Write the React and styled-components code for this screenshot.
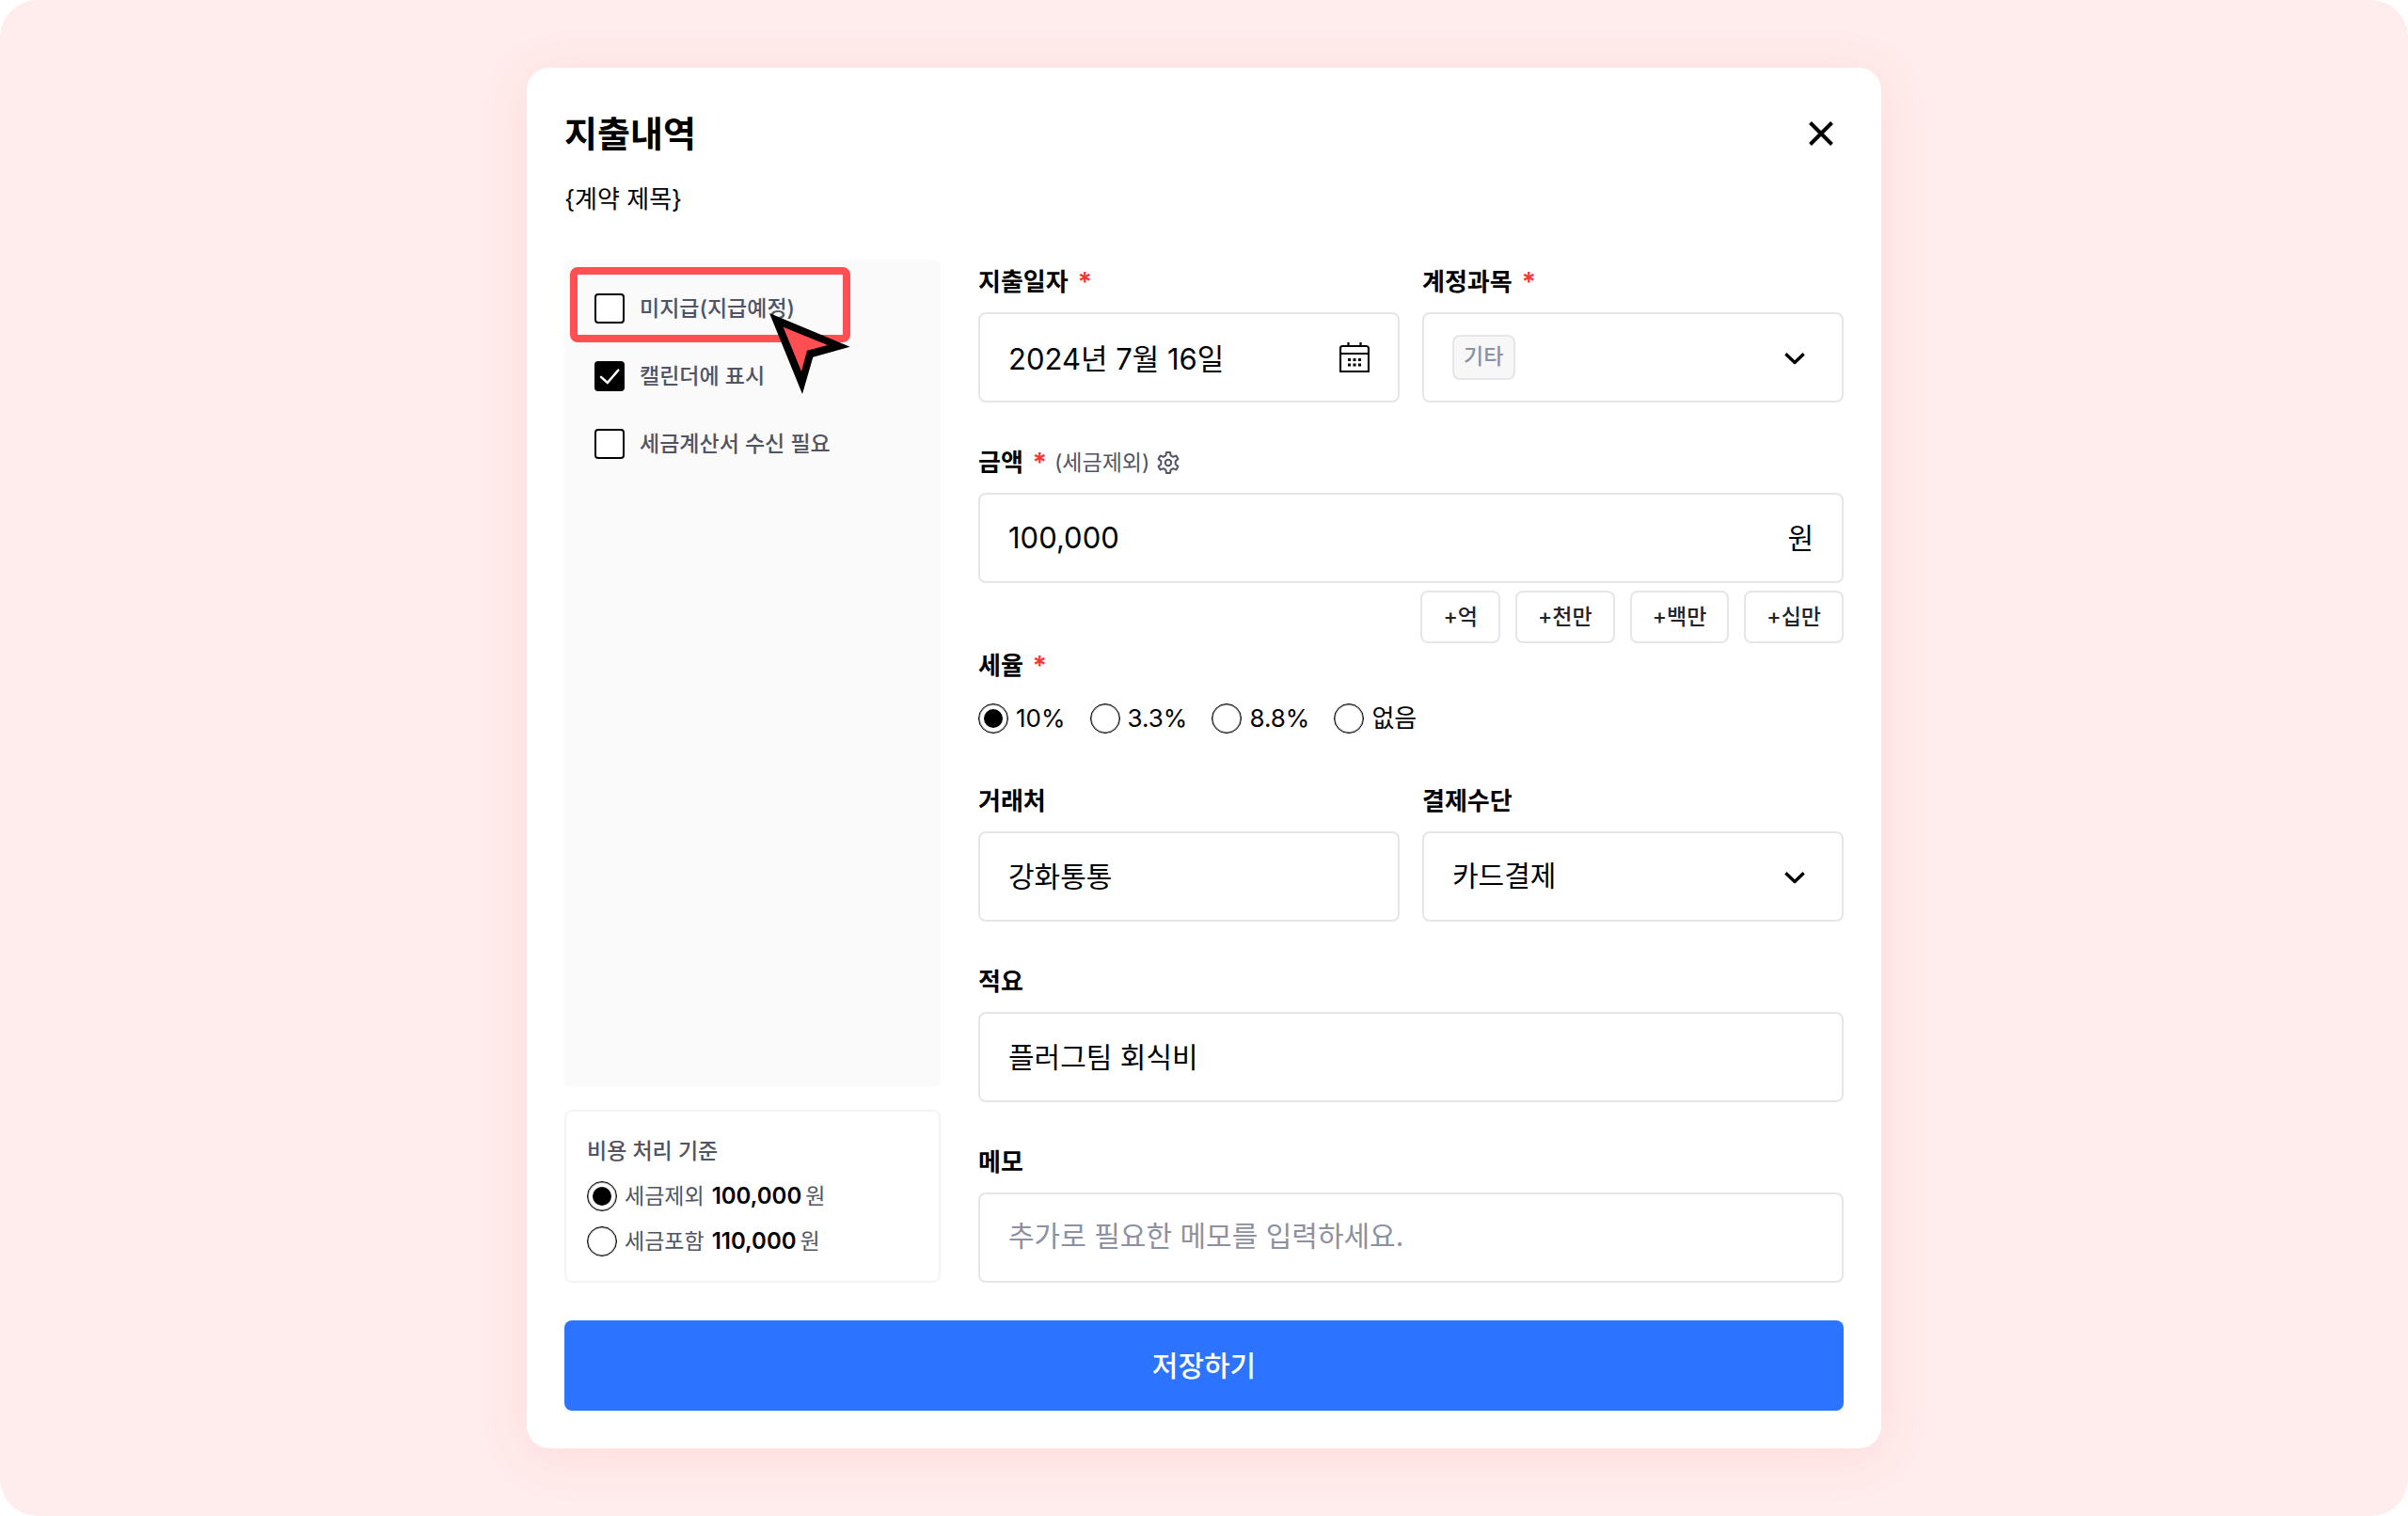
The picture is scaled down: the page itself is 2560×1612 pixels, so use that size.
import React, { useState } from "react";
import styled, { createGlobalStyle } from "styled-components";

const color = {
  text: "#000000",
  strong: "#222328",
  sub: "#505463",
  muted: "#8c91a2",
  line: "#e5e5ec",
  required: "#ff3232",
  accent: "#ff4f52",
  primary: "#2c74ff",
};

const GlobalStyle = createGlobalStyle`
  *, *::before, *::after { box-sizing: border-box; }
  body { margin: 0; background: #ffffff; }
  body, input, select, button {
    font-family: Inter, "Noto Sans CJK KR", sans-serif;
    color: ${color.text};
  }
`;

const Stage = styled.main`
  min-height: 100vh;
  display: flex;
  justify-content: center;
  align-items: center;
  padding: 72px;
  background: #ffecec;
  border-radius: 40px;
`;

const Dialog = styled.section`
  width: 100%;
  max-width: 1440px;
  padding: 40px;
  background: #ffffff;
  border-radius: 24px;
  box-shadow: 0 8px 56px rgba(255, 79, 82, 0.1);
`;

const Header = styled.header`
  display: flex;
  justify-content: space-between;
  align-items: center;
  height: 60px;
`;

const Title = styled.h1`
  margin: 0;
  font-size: 38px;
  line-height: 60px;
  font-weight: 600;
`;

const IconButton = styled.button`
  display: flex;
  align-items: center;
  justify-content: center;
  padding: 0;
  border: 0;
  background: none;
  color: ${(p) => p.$color || color.text};
  cursor: pointer;
`;

const Subtitle = styled.p`
  height: 48px;
  margin: 16px 0 40px;
  font-size: 26px;
  line-height: 48px;
`;

const Columns = styled.div`
  display: grid;
  grid-template-columns: 400px 1fr;
  gap: 40px;
`;

const Side = styled.div`
  display: flex;
  flex-direction: column;
  gap: 24px;
`;

const OptionPanel = styled.div`
  flex: 1;
  display: flex;
  flex-direction: column;
  gap: 40px;
  padding: 36px 32px;
  background: #fafafa;
  border-radius: 8px;
`;

const OptionRow = styled.div`
  position: relative;
  display: flex;
  align-items: center;
  gap: 16px;
  height: 32px;
  font-size: 23px;
  line-height: 32px;
  font-weight: 500;
  color: ${color.sub};
`;

const OptionLabel = styled.label`
  height: 32px;
`;

const Highlight = styled.div`
  position: absolute;
  left: -26px;
  top: -28px;
  width: 298px;
  height: 80px;
  border: 8px solid ${color.accent};
  border-radius: 8px;
  pointer-events: none;
`;

const Pointer = styled.svg`
  position: absolute;
  left: 186px;
  top: 21px;
  z-index: 1;
  pointer-events: none;
`;

const CheckWrap = styled.span`
  display: grid;
  flex: none;
  & > * { grid-area: 1 / 1; }
  svg { pointer-events: none; }
`;

const CheckInput = styled.input`
  appearance: none;
  width: 32px;
  height: 32px;
  margin: 0;
  background: #ffffff;
  border: 2px solid #000000;
  border-radius: 4px;
  &:checked { background: #000000; }
`;

const RadioInput = styled.input`
  appearance: none;
  flex: none;
  display: grid;
  place-items: center;
  width: 32px;
  height: 32px;
  margin: 0;
  border: 1px solid #000000;
  border-radius: 50%;
  box-shadow: inset 0 0 0 1px rgba(0, 0, 0, 0.4);
  &:checked::before {
    content: "";
    width: 20px;
    height: 20px;
    border-radius: 50%;
    background: #000000;
  }
`;

const BasisBox = styled.fieldset`
  display: flex;
  flex-direction: column;
  gap: 8px;
  min-width: 0;
  margin: 0;
  padding: 22px;
  border: 2px solid #f4f4f5;
  border-radius: 8px;
`;

const BasisTitle = styled.div`
  height: 40px;
  font-size: 23px;
  line-height: 40px;
  font-weight: 500;
  color: ${color.sub};
`;

const RadioLabel = styled.label`
  display: flex;
  align-items: center;
  gap: 8px;
  height: ${(p) => (p.$small ? 40 : 48)}px;
  font-size: ${(p) => (p.$small ? 23 : 26)}px;
  line-height: ${(p) => (p.$small ? 40 : 48)}px;
  color: ${(p) => (p.$small ? color.sub : color.text)};
`;

const Price = styled.span`
  display: flex;
  align-items: center;
  gap: 4px;
`;

const Amount = styled.strong`
  font-size: 24px;
  font-weight: 600;
  color: ${color.text};
`;

const Form = styled.div`
  display: flex;
  flex-direction: column;
  gap: 40px;
`;

const Pair = styled.div`
  display: grid;
  grid-template-columns: 1fr 1fr;
  gap: 24px;
`;

const Group = styled.div`
  display: flex;
  flex-direction: column;
`;

const Field = styled.div`
  display: flex;
  flex-direction: column;
  gap: 8px;
  min-width: 0;
`;

const LabelRow = styled.div`
  display: flex;
  align-items: center;
  gap: 8px;
  height: 48px;
  font-size: 26px;
  line-height: 48px;
  font-weight: 600;
`;

const Required = styled.span`
  margin-left: 2px;
  font-size: 28px;
  color: ${color.required};
`;

const LabelNote = styled.span`
  font-size: 23px;
  font-weight: 400;
  color: ${color.sub};
`;

const Control = styled.div`
  display: flex;
  align-items: center;
  gap: 16px;
  height: 96px;
  padding: 0 30px;
  border: 2px solid ${color.line};
  border-radius: 8px;
  font-size: 30px;
`;

const TextInput = styled.input`
  flex: 1;
  min-width: 0;
  height: 92px;
  padding: 0 0 ${(p) => (p.$numeric ? 2 : 4)}px;
  border: 0;
  outline: 0;
  background: none;
  font-size: ${(p) => (p.$numeric ? 31 : 30)}px;
  &::placeholder { color: ${color.muted}; opacity: 1; }
`;

const Unit = styled.span`
  padding-bottom: 4px;
`;

const PlainSelect = styled.select`
  appearance: none;
  flex: 1;
  min-width: 0;
  height: 92px;
  padding: 0 0 2px;
  border: 0;
  outline: 0;
  background: none;
  font-size: 30px;
`;

const ChipSelect = styled.select`
  appearance: none;
  height: 48px;
  margin-right: auto;
  padding: 0 10px 2px;
  border: 2px solid ${color.line};
  border-radius: 8px;
  background: #f7f7f8;
  font-size: 23px;
  font-weight: 500;
  color: ${color.muted};
`;

const QuickRow = styled.div`
  display: flex;
  justify-content: flex-end;
  gap: 16px;
`;

const QuickButton = styled.button`
  height: 56px;
  padding: 0 22px 4px;
  border: 2px solid ${color.line};
  border-radius: 8px;
  background: #ffffff;
  font-size: 23px;
  font-weight: 500;
  color: ${color.strong};
`;

const RadioRow = styled.div`
  display: flex;
  gap: 26px;
  height: 48px;
`;

const SaveButton = styled.button`
  width: 100%;
  height: 96px;
  margin-top: 40px;
  padding: 0 0 4px;
  border: 0;
  border-radius: 8px;
  background: ${color.primary};
  color: #ffffff;
  font-size: 30px;
  font-weight: 500;
`;

const CloseIcon = () => (
  <svg width="48" height="48" viewBox="0 0 48 48" fill="none" stroke="currentColor" strokeWidth="4">
    <path d="M12.5 12.5 35.5 35.5M35.5 12.5 12.5 35.5" />
  </svg>
);

const ChevronIcon = () => (
  <svg width="40" height="40" viewBox="0 0 40 40" fill="none" stroke="currentColor" strokeWidth="3.4" strokeLinejoin="round" aria-hidden="true">
    <path d="M10.4 16.2 20 25.4l9.6-9.2" />
  </svg>
);

const CalendarIcon = () => (
  <svg width="32" height="32" viewBox="0 0 32 32" aria-hidden="true">
    <path d="M1 31V6.5Q1 4 3.5 4h25Q31 4 31 6.5V31zM1 12h30M9.5 0v4M22.5 0v4" fill="none" stroke="currentColor" strokeWidth="2.2" />
    <path d="M9 17h3v3H9zM14.5 17h3v3h-3zM20 17h3v3h-3zM9 22.5h3v3H9zM14.5 22.5h3v3h-3zM20 22.5h3v3h-3z" fill="currentColor" />
  </svg>
);

const GearIcon = () => (
  <svg width="24" height="24" viewBox="0 0 24 24" fill="none" stroke="currentColor" strokeWidth="2" strokeLinejoin="round">
    <path d="M10 1h4l.6 3.3 2.5 1.5 3.3-1.2 2 3.5-2.7 2.2v3.4l2.7 2.2-2 3.5-3.3-1.2-2.5 1.5L14 23h-4l-.6-3.3-2.5-1.5-3.3 1.2-2-3.5 2.7-2.2v-3.4L1.6 8.100l2-3.5 3.3 1.2 2.5-1.5z" />
    <circle cx="12" cy="12" r="3.2" />
  </svg>
);

function CheckOption({ id, label, defaultChecked, children }) {
  const [checked, setChecked] = useState(Boolean(defaultChecked));
  return (
    <OptionRow>
      <CheckWrap>
        <CheckInput id={id} type="checkbox" checked={checked} onChange={(e) => setChecked(e.target.checked)} />
        {checked && (
          <svg width="32" height="32" viewBox="0 0 32 32" fill="none" stroke="#fff" strokeWidth="2.4" strokeLinecap="round" aria-hidden="true">
            <path d="M7 16.8 13.8 23 25.3 9.6" />
          </svg>
        )}
      </CheckWrap>
      <OptionLabel htmlFor={id}>{label}</OptionLabel>
      {children}
    </OptionRow>
  );
}

function FieldLabel({ htmlFor, children, required, extra }) {
  return (
    <LabelRow>
      <label htmlFor={htmlFor}>{children}</label>
      {required && <Required>*</Required>}
      {extra}
    </LabelRow>
  );
}

function BasisOption({ label, value, defaultChecked }) {
  return (
    <RadioLabel $small>
      <RadioInput type="radio" name="basis" defaultChecked={defaultChecked} />
      <span>{label}</span>
      <Price>
        <Amount>{value}</Amount>
        <span>원</span>
      </Price>
    </RadioLabel>
  );
}

const quickAmounts = [["+억", 100000000], ["+천만", 10000000], ["+백만", 1000000], ["+십만", 100000]];
const taxRates = ["10%", "3.3%", "8.8%", "없음"];

export default function App() {
  const [amount, setAmount] = useState(100000);
  const format = (n) => n.toLocaleString("en-US");
  return (
    <>
      <GlobalStyle />
      <Stage lang="ko">
        <Dialog role="dialog" aria-labelledby="dialog-title">
          <Header>
            <Title id="dialog-title">지출내역</Title>
            <IconButton type="button" aria-label="닫기"><CloseIcon /></IconButton>
          </Header>
          <Subtitle>{"{계약 제목}"}</Subtitle>

          <Columns>
            <Side>
              <OptionPanel>
                <CheckOption id="unpaid" label="미지급(지급예정)">
                  <Highlight />
                  <Pointer width="86" height="86" viewBox="0 0 258 258" aria-hidden="true">
                    <path d="M0 0 257 107 139 140 105 258z" fill="#000" />
                    <path d="M44 44 186 102 120 119 102 186z" fill={color.accent} />
                  </Pointer>
                </CheckOption>
                <CheckOption id="calendar" label="캘린더에 표시" defaultChecked />
                <CheckOption id="invoice" label="세금계산서 수신 필요" />
              </OptionPanel>
              <BasisBox aria-labelledby="basis-title">
                <BasisTitle id="basis-title">비용 처리 기준</BasisTitle>
                <BasisOption label="세금제외" value={format(amount)} defaultChecked />
                <BasisOption label="세금포함" value={format(Math.round(amount * 1.1))} />
              </BasisBox>
            </Side>

            <Form>
              <Pair>
                <Field>
                  <FieldLabel htmlFor="date" required>지출일자</FieldLabel>
                  <Control>
                    <TextInput id="date" $numeric defaultValue="2024년 7월 16일" />
                    <IconButton type="button" aria-label="날짜 선택"><CalendarIcon /></IconButton>
                  </Control>
                </Field>
                <Field>
                  <FieldLabel htmlFor="account" required>계정과목</FieldLabel>
                  <Control>
                    <ChipSelect id="account"><option>기타</option></ChipSelect>
                    <ChevronIcon />
                  </Control>
                </Field>
              </Pair>

              <Group>
                <Field>
                  <FieldLabel
                    htmlFor="amount"
                    required
                    extra={
                      <>
                        <LabelNote>(세금제외)</LabelNote>
                        <IconButton type="button" aria-label="금액 설정" $color={color.sub}><GearIcon /></IconButton>
                      </>
                    }
                  >
                    금액
                  </FieldLabel>
                  <Control>
                    <TextInput
                      id="amount"
                      $numeric
                      value={format(amount)}
                      onChange={(e) => setAmount(Number(e.target.value.replace(/\D/g, "")))}
                    />
                    <Unit>원</Unit>
                  </Control>
                  <QuickRow>
                    {quickAmounts.map(([label, step]) => (
                      <QuickButton key={label} type="button" onClick={() => setAmount(amount + step)}>{label}</QuickButton>
                    ))}
                  </QuickRow>
                </Field>
                <Field role="radiogroup" aria-labelledby="tax-title">
                  <LabelRow><span id="tax-title">세율</span><Required>*</Required></LabelRow>
                  <RadioRow>
                    {taxRates.map((rate, i) => (
                      <RadioLabel key={rate}>
                        <RadioInput type="radio" name="tax" defaultChecked={i === 0} />
                        <span>{rate}</span>
                      </RadioLabel>
                    ))}
                  </RadioRow>
                </Field>
              </Group>

              <Pair>
                <Field>
                  <FieldLabel htmlFor="client">거래처</FieldLabel>
                  <Control><TextInput id="client" defaultValue="강화통통" /></Control>
                </Field>
                <Field>
                  <FieldLabel htmlFor="method">결제수단</FieldLabel>
                  <Control>
                    <PlainSelect id="method"><option>카드결제</option></PlainSelect>
                    <ChevronIcon />
                  </Control>
                </Field>
              </Pair>

              <Field>
                <FieldLabel htmlFor="summary">적요</FieldLabel>
                <Control><TextInput id="summary" defaultValue="플러그팀 회식비" /></Control>
              </Field>
              <Field>
                <FieldLabel htmlFor="memo">메모</FieldLabel>
                <Control><TextInput id="memo" placeholder="추가로 필요한 메모를 입력하세요." /></Control>
              </Field>
            </Form>
          </Columns>

          <SaveButton type="button">저장하기</SaveButton>
        </Dialog>
      </Stage>
    </>
  );
}
